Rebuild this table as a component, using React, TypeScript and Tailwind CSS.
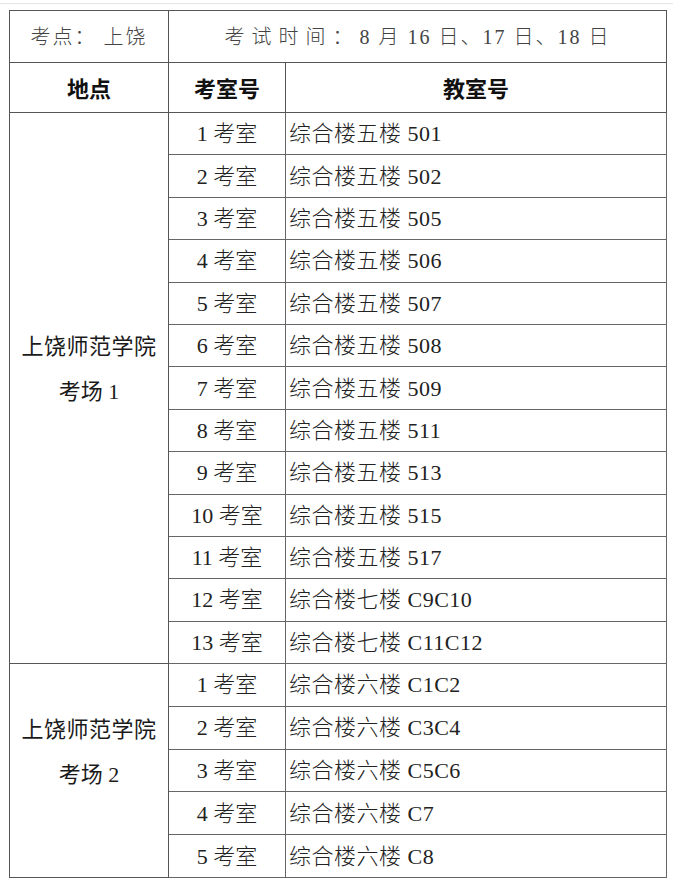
import React from "react";

const g1: [string, string][] = [
  ["1", "综合楼五楼 501"],
  ["2", "综合楼五楼 502"],
  ["3", "综合楼五楼 505"],
  ["4", "综合楼五楼 506"],
  ["5", "综合楼五楼 507"],
  ["6", "综合楼五楼 508"],
  ["7", "综合楼五楼 509"],
  ["8", "综合楼五楼 511"],
  ["9", "综合楼五楼 513"],
  ["10", "综合楼五楼 515"],
  ["11", "综合楼五楼 517"],
  ["12", "综合楼七楼 C9C10"],
  ["13", "综合楼七楼 C11C12"],
];

const g2: [string, string][] = [
  ["1", "综合楼六楼 C1C2"],
  ["2", "综合楼六楼 C3C4"],
  ["3", "综合楼六楼 C5C6"],
  ["4", "综合楼六楼 C7"],
  ["5", "综合楼六楼 C8"],
];

const serif = { fontFamily: '"Liberation Serif", "Noto Sans CJK SC", serif' };
const sans = { fontFamily: '"Noto Sans CJK SC", "Liberation Sans", sans-serif' };

function Group({ rows, label, tall }: { rows: [string, string][]; label: string; tall?: boolean }) {
  return (
    <>
      {rows.map(([n, room], i) => (
        <tr key={n} className={tall ? "h-[42.8px]" : "h-[42.4px]"}>
          {i === 0 && (
            <td
              rowSpan={rows.length}
              className="border border-[#555] text-center align-middle pb-[38px] text-[22px] leading-[45px] text-[#1a1a1a] font-normal"
              style={serif}
            >
              <div className="tracking-[0.5px]">上饶师范学院</div>
              <div>{label}</div>
            </td>
          )}
          <td
            className="border border-[#666] text-center align-middle text-[22px] text-[#222] font-light"
            style={serif}
          >
            {n} 考室
          </td>
          <td
            className="border border-[#666] text-left align-middle pl-[3px] text-[22px] text-[#222] font-light tracking-[0.5px]"
            style={serif}
          >
            {room}
          </td>
        </tr>
      ))}
    </>
  );
}

export default function App() {
  return (
    <div className="w-[673px] h-[885px] bg-white relative overflow-hidden">
      <div className="h-[3px]" />
      <div className="h-px bg-[#e6e6e6]" />
      <div className="pt-[6px] pl-[9px]">
        <table className="table-fixed border-collapse w-[657px]">
          <colgroup>
            <col className="w-[159px]" />
            <col className="w-[117px]" />
            <col className="w-[381px]" />
          </colgroup>
          <tbody>
            <tr className="h-[52px]">
              <td
                className="border border-[#555] text-center align-middle text-[20px] text-[#444] font-light tracking-[2px]"
                style={serif}
              >
                考点： 上饶
              </td>
              <td
                colSpan={2}
                className="border border-[#555] text-center align-middle text-[20px] text-[#444] font-light"
                style={serif}
              >
                <span className="tracking-[7px]">考试时间</span>
                <span>：</span>
                <span className="tracking-[2px]"> 8 月 16 日、17 日、18 日</span>
              </td>
            </tr>
            <tr className="h-[50px]">
              <td className="border border-[#555] text-center align-middle text-[22px] text-[#111] font-bold" style={sans}>
                地点
              </td>
              <td className="border border-[#555] text-center align-middle text-[22px] text-[#111] font-bold" style={sans}>
                考室号
              </td>
              <td className="border border-[#555] text-center align-middle text-[22px] text-[#111] font-bold" style={sans}>
                教室号
              </td>
            </tr>
            <Group rows={g1} label="考场 1" />
            <Group rows={g2} label="考场 2" tall />
          </tbody>
        </table>
      </div>
    </div>
  );
}
